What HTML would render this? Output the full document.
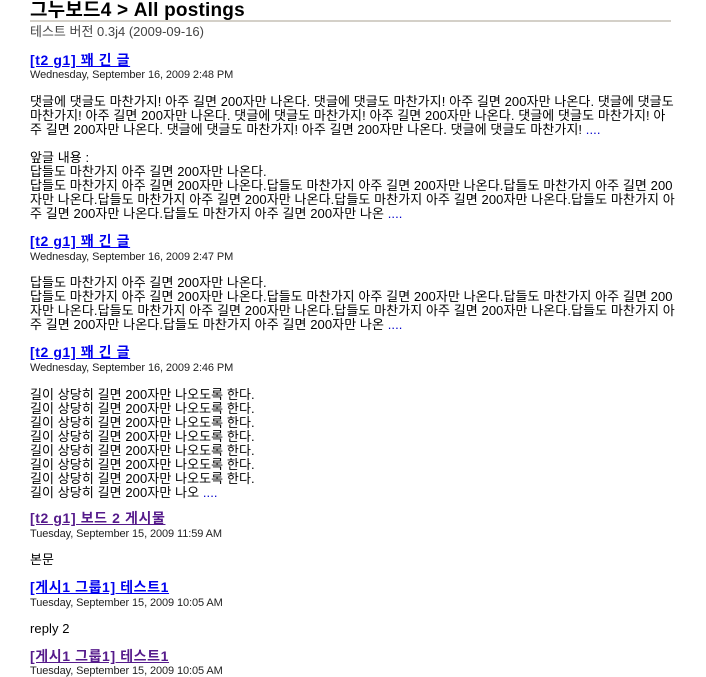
<!DOCTYPE html>
<html><head><meta charset="utf-8"><style>
body{margin:0;background:#fff;font-family:"Liberation Sans","Noto Sans CJK KR","NanumGothic",sans-serif;color:#000;width:706px;height:671px;overflow:hidden;position:relative}
.a{position:absolute;left:30px;white-space:nowrap}
h1{position:absolute;left:30px;top:0;margin:0;font-size:19px;font-weight:bold;line-height:22px;letter-spacing:0.2px}
.hr{position:absolute;left:30px;top:20px;width:641px;height:2px;background:#d4d0c8}
.sub{top:24px;font-size:13px;color:#444;line-height:16px}
.l{font-size:14px;font-weight:bold;color:#0000ee;text-decoration:underline;line-height:16px;letter-spacing:0.6px}
.v{color:#551a8b}
.d{font-size:11px;color:#222;line-height:12px;letter-spacing:-0.1px}
.b{font-size:13px;line-height:14px;letter-spacing:0.08px}
.m{color:#00c;}
</style></head><body>
<h1>그누보드4 &gt; All postings</h1>
<div class="hr"></div>
<div class="a sub">테스트 버전 0.3j4 (2009-09-16)</div>

<div class="a l" style="top:52px">[t2 g1] 꽤 긴 글</div>
<div class="a d" style="top:69px">Wednesday, September 16, 2009 2:48 PM</div>
<div class="a b" style="top:95px">댓글에 댓글도 마찬가지! 아주 길면 200자만 나온다. 댓글에 댓글도 마찬가지! 아주 길면 200자만 나온다. 댓글에 댓글도<br>마찬가지! 아주 길면 200자만 나온다. 댓글에 댓글도 마찬가지! 아주 길면 200자만 나온다. 댓글에 댓글도 마찬가지! 아<br>주 길면 200자만 나온다. 댓글에 댓글도 마찬가지! 아주 길면 200자만 나온다. 댓글에 댓글도 마찬가지! <span class="m">....</span><br><br>앞글 내용 :<br>답들도 마찬가지 아주 길면 200자만 나온다.<br>답들도 마찬가지 아주 길면 200자만 나온다.답들도 마찬가지 아주 길면 200자만 나온다.답들도 마찬가지 아주 길면 200<br>자만 나온다.답들도 마찬가지 아주 길면 200자만 나온다.답들도 마찬가지 아주 길면 200자만 나온다.답들도 마찬가지 아<br>주 길면 200자만 나온다.답들도 마찬가지 아주 길면 200자만 나온 <span class="m">....</span></div>

<div class="a l" style="top:233px">[t2 g1] 꽤 긴 글</div>
<div class="a d" style="top:251px">Wednesday, September 16, 2009 2:47 PM</div>
<div class="a b" style="top:276px">답들도 마찬가지 아주 길면 200자만 나온다.<br>답들도 마찬가지 아주 길면 200자만 나온다.답들도 마찬가지 아주 길면 200자만 나온다.답들도 마찬가지 아주 길면 200<br>자만 나온다.답들도 마찬가지 아주 길면 200자만 나온다.답들도 마찬가지 아주 길면 200자만 나온다.답들도 마찬가지 아<br>주 길면 200자만 나온다.답들도 마찬가지 아주 길면 200자만 나온 <span class="m">....</span></div>

<div class="a l" style="top:344px">[t2 g1] 꽤 긴 글</div>
<div class="a d" style="top:362px">Wednesday, September 16, 2009 2:46 PM</div>
<div class="a b" style="top:388px">길이 상당히 길면 200자만 나오도록 한다.<br>길이 상당히 길면 200자만 나오도록 한다.<br>길이 상당히 길면 200자만 나오도록 한다.<br>길이 상당히 길면 200자만 나오도록 한다.<br>길이 상당히 길면 200자만 나오도록 한다.<br>길이 상당히 길면 200자만 나오도록 한다.<br>길이 상당히 길면 200자만 나오도록 한다.<br>길이 상당히 길면 200자만 나오 <span class="m">....</span></div>

<div class="a l v" style="top:510px">[t2 g1] 보드 2 게시물</div>
<div class="a d" style="top:528px">Tuesday, September 15, 2009 11:59 AM</div>
<div class="a b" style="top:553px">본문</div>

<div class="a l" style="top:579px">[게시1 그룹1] 테스트1</div>
<div class="a d" style="top:597px">Tuesday, September 15, 2009 10:05 AM</div>
<div class="a b" style="top:622px">reply 2</div>

<div class="a l v" style="top:648px">[게시1 그룹1] 테스트1</div>
<div class="a d" style="top:665px">Tuesday, September 15, 2009 10:05 AM</div>
</body></html>
